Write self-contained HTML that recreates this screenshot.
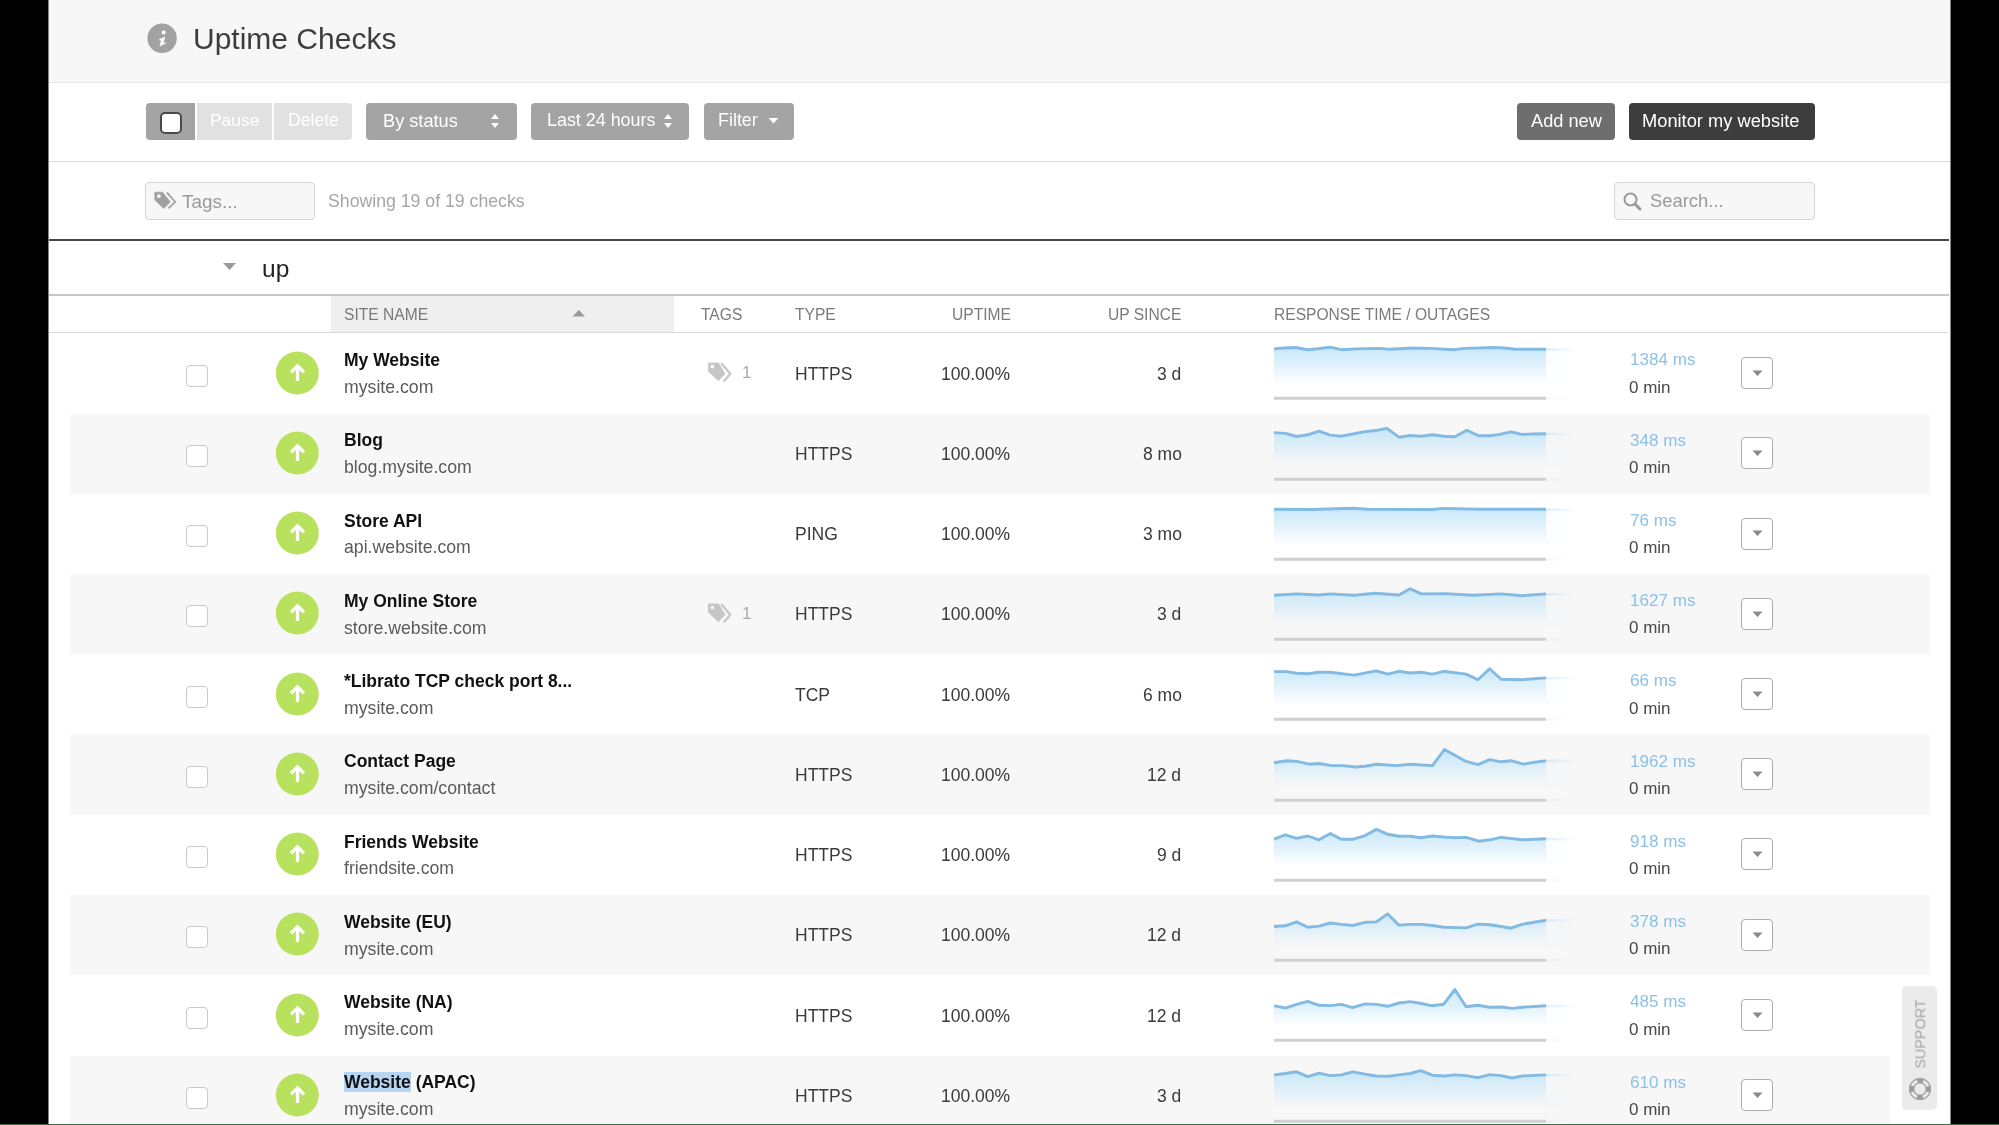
<!DOCTYPE html>
<html><head><meta charset="utf-8"><title>Uptime Checks</title>
<style>
html,body{margin:0;padding:0}
body{width:1999px;height:1125px;position:relative;overflow:hidden;background:#000;font-family:"Liberation Sans",sans-serif}
.a{position:absolute;box-sizing:border-box}
.t{position:absolute;white-space:nowrap;will-change:transform}
svg{position:absolute;overflow:visible}
</style></head><body>
<div class="a" style="left:49px;top:0px;width:1901px;height:1125px;background:#fff"></div>
<div class="a" style="left:48px;top:0px;width:1px;height:1124px;background:#858585"></div>
<div class="a" style="left:1950px;top:0px;width:1px;height:1124px;background:#858585"></div>
<div class="a" style="left:49px;top:0px;width:1901px;height:82px;background:#f7f7f7"></div>
<div class="a" style="left:49px;top:82px;width:1901px;height:1px;background:#e6e6e6"></div>
<svg style="left:147px;top:23px" width="30" height="30"><circle cx="15.1" cy="15.25" r="14.7" fill="#a2a2a2"/><circle cx="16.7" cy="9.5" r="2.05" fill="#fff"/><path d="M12.2 16.6 L17.9 13.9 L16.2 19.9 L18.9 20.0 L12.9 23.0 L14.3 17.4 Z" fill="#fff" stroke="#fff" stroke-width="0.6" stroke-linejoin="round"/></svg>
<div class="t" style="left:193.00px;top:23.81px;font-size:30px;line-height:30px;color:#3d3d3d;">Uptime Checks</div>
<div class="a" style="left:146px;top:103px;width:49px;height:37px;background:#a4a4a4;border-radius:4px 0 0 4px"></div>
<div class="a" style="left:160px;top:112px;width:22px;height:22px;background:#fff;border:2px solid #4a4a4a;border-radius:5px"></div>
<div class="a" style="left:197px;top:103px;width:75px;height:37px;background:#e1e1e1"></div>
<div class="a" style="left:274px;top:103px;width:78px;height:37px;background:#e1e1e1;border-radius:0 4px 4px 0"></div>
<div class="t" style="left:210.00px;top:112.27px;font-size:17.4px;line-height:17.4px;color:#fff;">Pause</div>
<div class="t" style="left:288.00px;top:112.10px;font-size:17.6px;line-height:17.6px;color:#fff;">Delete</div>
<div class="a" style="left:366px;top:103px;width:151px;height:37px;background:#a4a4a4;border-radius:4px"></div>
<div class="a" style="left:531px;top:103px;width:158px;height:37px;background:#a4a4a4;border-radius:4px"></div>
<div class="a" style="left:704px;top:103px;width:90px;height:37px;background:#a4a4a4;border-radius:4px"></div>
<div class="t" style="left:383.00px;top:111.59px;font-size:18.2px;line-height:18.2px;color:#fff;">By status</div>
<div class="t" style="left:547.00px;top:111.85px;font-size:17.9px;line-height:17.9px;color:#fff;">Last 24 hours</div>
<div class="t" style="left:718.00px;top:111.85px;font-size:17.9px;line-height:17.9px;color:#fff;">Filter</div>
<svg style="left:488.5px;top:111px" width="12" height="20"><path d="M2 8 L6 3 L10 8 Z M2 12 L6 17 L10 12 Z" fill="#fff"/></svg>
<svg style="left:662px;top:111px" width="12" height="20"><path d="M2 8 L6 3 L10 8 Z M2 12 L6 17 L10 12 Z" fill="#fff"/></svg>
<svg style="left:768px;top:117px" width="12" height="8"><path d="M0.5 1 L10.5 1 L5.5 6.5 Z" fill="#fff"/></svg>
<div class="a" style="left:1517px;top:103px;width:98px;height:37px;background:#6e6e6e;border-radius:4px"></div>
<div class="a" style="left:1629px;top:103px;width:186px;height:37px;background:#3d3d3d;border-radius:4px"></div>
<div class="t" style="left:1531.00px;top:111.59px;font-size:18.2px;line-height:18.2px;color:#fff;">Add new</div>
<div class="t" style="left:1642.00px;top:111.51px;font-size:18.3px;line-height:18.3px;color:#fff;">Monitor my website</div>
<div class="a" style="left:49px;top:161px;width:1901px;height:1px;background:#d9d9d9"></div>
<div class="a" style="left:145px;top:182px;width:170px;height:38px;background:#f7f7f7;border:1.5px solid #d6d6d6;border-radius:4px"></div>
<svg style="left:154px;top:191px" width="24" height="20"><path d="M0.9 1.2 L8.4 1.2 L16.3 11.0 L9.7 17.4 L0.9 8.9 Z" fill="#a0a0a0" stroke="#a0a0a0" stroke-width="0.8" stroke-linejoin="round"/><circle cx="4.9" cy="5.2" r="1.9" fill="#f7f7f7"/><path d="M12.9 1.4 L21.2 11.0 L14.4 17.4" fill="none" stroke="#a6a6a6" stroke-width="1.9"/></svg>
<div class="t" style="left:182.00px;top:192.80px;font-size:18.9px;line-height:18.9px;color:#999;">Tags...</div>
<div class="t" style="left:328.00px;top:192.92px;font-size:17.7px;line-height:17.7px;color:#a6a6a6;">Showing 19 of 19 checks</div>
<div class="a" style="left:1614px;top:182px;width:201px;height:38px;background:#f7f7f7;border:1.5px solid #d6d6d6;border-radius:4px"></div>
<svg style="left:1622px;top:191px" width="22" height="22"><circle cx="8.5" cy="8.5" r="6" fill="none" stroke="#9a9a9a" stroke-width="2"/><path d="M13 13 L18 18" stroke="#9a9a9a" stroke-width="3" stroke-linecap="round"/></svg>
<div class="t" style="left:1650.00px;top:191.92px;font-size:18.4px;line-height:18.4px;color:#999;">Search...</div>
<div class="a" style="left:49px;top:239px;width:1900px;height:2px;background:#474747"></div>
<svg style="left:222px;top:262px" width="16" height="10"><path d="M1 1 L14 1 L7.5 8 Z" fill="#9a9a9a"/></svg>
<div class="t" style="left:262.00px;top:256.51px;font-size:24.5px;line-height:24.5px;color:#222;">up</div>
<div class="a" style="left:49px;top:294px;width:1900px;height:2px;background:#c6c6c6"></div>
<div class="a" style="left:331px;top:296px;width:343px;height:36px;background:#efefef"></div>
<div class="a" style="left:49px;top:332px;width:1900px;height:1px;background:#dadada"></div>
<div class="t" style="left:344.00px;top:306.79px;font-size:15.6px;line-height:15.6px;color:#7a7a7a;">SITE NAME</div>
<svg style="left:571px;top:309px" width="16" height="9"><path d="M1.5 7.5 L14 7.5 L7.75 1 Z" fill="#9a9a9a"/></svg>
<div class="t" style="left:701.00px;top:306.79px;font-size:15.6px;line-height:15.6px;color:#7a7a7a;">TAGS</div>
<div class="t" style="left:795.00px;top:306.79px;font-size:15.6px;line-height:15.6px;color:#7a7a7a;">TYPE</div>
<div class="t" style="right:988.50px;top:306.79px;font-size:15.6px;line-height:15.6px;color:#7a7a7a;">UPTIME</div>
<div class="t" style="right:817.50px;top:306.79px;font-size:15.6px;line-height:15.6px;color:#7a7a7a;">UP SINCE</div>
<div class="t" style="left:1274.00px;top:306.79px;font-size:15.6px;line-height:15.6px;color:#7a7a7a;">RESPONSE TIME / OUTAGES</div>
<div class="a" style="left:186px;top:365px;width:22px;height:22px;background:#fff;border:1.5px solid #c9c9c9;border-radius:4px"></div>
<svg style="left:275px;top:350.55px" width="44" height="44"><circle cx="22.3" cy="22" r="21.5" fill="#b8e25e"/><path d="M22.5 30 L22.5 15.5 M16 21.3 L22.5 14.8 L29 21.3" fill="none" stroke="#fff" stroke-width="3.3" stroke-linecap="butt" stroke-linejoin="miter"/></svg>
<div class="t" style="left:344.00px;top:352.14px;font-size:17.5px;line-height:17.5px;color:#111;font-weight:bold;">My Website</div>
<div class="t" style="left:344.00px;top:378.87px;font-size:17.7px;line-height:17.7px;color:#5a5a5a;">mysite.com</div>
<svg style="left:707px;top:362.25px" width="26" height="22"><path d="M1.4 0.9 L11.6 0.9 L17.9 11.8 L11.4 18.8 L1.4 9.2 Z" fill="#c6c6c6" stroke="#c6c6c6" stroke-width="0.8" stroke-linejoin="round"/><circle cx="5.4" cy="4.6" r="1.8" fill="#fff"/><path d="M14.3 1.2 L23.3 11.8 L16.6 19.5" fill="none" stroke="#c8c8c8" stroke-width="2.3"/></svg>
<div class="t" style="left:742.00px;top:364.06px;font-size:17px;line-height:17px;color:#aaa;">1</div>
<div class="t" style="left:795.00px;top:365.64px;font-size:17.5px;line-height:17.5px;color:#3a3a3a;">HTTPS</div>
<div class="t" style="right:988.50px;top:365.64px;font-size:17.5px;line-height:17.5px;color:#3a3a3a;">100.00%</div>
<div class="t" style="right:817.50px;top:365.64px;font-size:17.5px;line-height:17.5px;color:#3a3a3a;">3 d</div>
<svg style="left:1274px;top:333.25px" width="304" height="70"><defs><linearGradient id="g0" x1="0" y1="0" x2="0" y2="56" gradientUnits="userSpaceOnUse"><stop offset="0.22" stop-color="#bde3f8" stop-opacity="0.9"/><stop offset="0.6" stop-color="#cbe9fa" stop-opacity="0.55"/><stop offset="0.95" stop-color="#e0f0fb" stop-opacity="0"/></linearGradient><linearGradient id="h0" x1="272" y1="0" x2="304" y2="0" gradientUnits="userSpaceOnUse"><stop offset="0" stop-color="#9fd0f0" stop-opacity="0.35"/><stop offset="1" stop-color="#9fd0f0" stop-opacity="0"/></linearGradient></defs><path d="M0.0 15.9 L9.8 15.0 L21.7 14.5 L33.6 16.7 L43.8 15.7 L55.7 14.2 L67.6 16.7 L81.2 15.9 L105.0 15.4 L115.3 16.2 L139.1 15.0 L156.1 15.4 L179.9 16.7 L190.1 15.4 L220.7 14.5 L230.9 15.0 L241.1 16.2 L272.0 16.2 L272 56 L0 56 Z" fill="url(#g0)"/><path d="M0.0 15.9 L9.8 15.0 L21.7 14.5 L33.6 16.7 L43.8 15.7 L55.7 14.2 L67.6 16.7 L81.2 15.9 L105.0 15.4 L115.3 16.2 L139.1 15.0 L156.1 15.4 L179.9 16.7 L190.1 15.4 L220.7 14.5 L230.9 15.0 L241.1 16.2 L272.0 16.2" fill="none" stroke="#82bae3" stroke-width="2.9" stroke-linejoin="round"/><rect x="0" y="63.75" width="272" height="3" fill="#d0d0d0"/><rect x="272" y="15.2" width="30" height="2.5" fill="url(#h0)"/><rect x="272" y="17.7" width="30" height="33.8" fill="url(#h0)" opacity="0.12"/><rect x="272" y="63.75" width="30" height="3" fill="url(#h0)" opacity="0.3"/></svg>
<div class="t" style="left:1630.00px;top:351.27px;font-size:17.1px;line-height:17.1px;color:#8cc1e8;">1384 ms</div>
<div class="t" style="left:1629.00px;top:378.66px;font-size:17px;line-height:17px;color:#484848;">0 min</div>
<div class="a" style="left:1741px;top:357px;width:32px;height:32px;background:#fff;border:1.5px solid #adadad;border-radius:4px"></div>
<svg style="left:1752px;top:369.75px" width="12" height="8"><path d="M0.5 0.5 L10.5 0.5 L5.5 6 Z" fill="#8a8a8a"/></svg>
<div class="a" style="left:70px;top:414px;width:1860px;height:80px;background:#f7f7f7"></div>
<div class="a" style="left:186px;top:445px;width:22px;height:22px;background:#fff;border:1.5px solid #c9c9c9;border-radius:4px"></div>
<svg style="left:275px;top:430.80px" width="44" height="44"><circle cx="22.3" cy="22" r="21.5" fill="#b8e25e"/><path d="M22.5 30 L22.5 15.5 M16 21.3 L22.5 14.8 L29 21.3" fill="none" stroke="#fff" stroke-width="3.3" stroke-linecap="butt" stroke-linejoin="miter"/></svg>
<div class="t" style="left:344.00px;top:432.39px;font-size:17.5px;line-height:17.5px;color:#111;font-weight:bold;">Blog</div>
<div class="t" style="left:344.00px;top:459.12px;font-size:17.7px;line-height:17.7px;color:#5a5a5a;">blog.mysite.com</div>
<div class="t" style="left:795.00px;top:445.89px;font-size:17.5px;line-height:17.5px;color:#3a3a3a;">HTTPS</div>
<div class="t" style="right:988.50px;top:445.89px;font-size:17.5px;line-height:17.5px;color:#3a3a3a;">100.00%</div>
<div class="t" style="right:817.50px;top:445.89px;font-size:17.5px;line-height:17.5px;color:#3a3a3a;">8 mo</div>
<svg style="left:1274px;top:413.50px" width="304" height="70"><defs><linearGradient id="g1" x1="0" y1="0" x2="0" y2="56" gradientUnits="userSpaceOnUse"><stop offset="0.22" stop-color="#bde3f8" stop-opacity="0.9"/><stop offset="0.6" stop-color="#cbe9fa" stop-opacity="0.55"/><stop offset="0.95" stop-color="#e0f0fb" stop-opacity="0"/></linearGradient><linearGradient id="h1" x1="272" y1="0" x2="304" y2="0" gradientUnits="userSpaceOnUse"><stop offset="0" stop-color="#9fd0f0" stop-opacity="0.35"/><stop offset="1" stop-color="#9fd0f0" stop-opacity="0"/></linearGradient></defs><path d="M0.0 18.6 L11.4 19.4 L22.6 22.5 L33.8 20.8 L45.0 17.2 L56.2 21.1 L67.4 22.2 L78.6 20.0 L91.2 17.6 L103.8 16.2 L112.9 14.4 L124.9 23.2 L136.1 21.5 L147.3 22.2 L158.5 20.8 L169.7 22.2 L180.9 22.8 L192.8 16.2 L204.7 21.8 L215.9 21.8 L225.7 20.4 L236.9 17.9 L248.1 20.4 L259.3 20.0 L272.0 19.7 L272 56 L0 56 Z" fill="url(#g1)"/><path d="M0.0 18.6 L11.4 19.4 L22.6 22.5 L33.8 20.8 L45.0 17.2 L56.2 21.1 L67.4 22.2 L78.6 20.0 L91.2 17.6 L103.8 16.2 L112.9 14.4 L124.9 23.2 L136.1 21.5 L147.3 22.2 L158.5 20.8 L169.7 22.2 L180.9 22.8 L192.8 16.2 L204.7 21.8 L215.9 21.8 L225.7 20.4 L236.9 17.9 L248.1 20.4 L259.3 20.0 L272.0 19.7" fill="none" stroke="#82bae3" stroke-width="2.9" stroke-linejoin="round"/><rect x="0" y="63.75" width="272" height="3" fill="#d0d0d0"/><rect x="272" y="18.7" width="30" height="2.5" fill="url(#h1)"/><rect x="272" y="21.2" width="30" height="30.3" fill="url(#h1)" opacity="0.12"/><rect x="272" y="63.75" width="30" height="3" fill="url(#h1)" opacity="0.3"/></svg>
<div class="t" style="left:1630.00px;top:431.52px;font-size:17.1px;line-height:17.1px;color:#8cc1e8;">348 ms</div>
<div class="t" style="left:1629.00px;top:458.91px;font-size:17px;line-height:17px;color:#484848;">0 min</div>
<div class="a" style="left:1741px;top:437px;width:32px;height:32px;background:#fff;border:1.5px solid #adadad;border-radius:4px"></div>
<svg style="left:1752px;top:450.00px" width="12" height="8"><path d="M0.5 0.5 L10.5 0.5 L5.5 6 Z" fill="#8a8a8a"/></svg>
<div class="a" style="left:186px;top:525px;width:22px;height:22px;background:#fff;border:1.5px solid #c9c9c9;border-radius:4px"></div>
<svg style="left:275px;top:511.05px" width="44" height="44"><circle cx="22.3" cy="22" r="21.5" fill="#b8e25e"/><path d="M22.5 30 L22.5 15.5 M16 21.3 L22.5 14.8 L29 21.3" fill="none" stroke="#fff" stroke-width="3.3" stroke-linecap="butt" stroke-linejoin="miter"/></svg>
<div class="t" style="left:344.00px;top:512.64px;font-size:17.5px;line-height:17.5px;color:#111;font-weight:bold;">Store API</div>
<div class="t" style="left:344.00px;top:539.37px;font-size:17.7px;line-height:17.7px;color:#5a5a5a;">api.website.com</div>
<div class="t" style="left:795.00px;top:526.14px;font-size:17.5px;line-height:17.5px;color:#3a3a3a;">PING</div>
<div class="t" style="right:988.50px;top:526.14px;font-size:17.5px;line-height:17.5px;color:#3a3a3a;">100.00%</div>
<div class="t" style="right:817.50px;top:526.14px;font-size:17.5px;line-height:17.5px;color:#3a3a3a;">3 mo</div>
<svg style="left:1274px;top:493.75px" width="304" height="70"><defs><linearGradient id="g2" x1="0" y1="0" x2="0" y2="56" gradientUnits="userSpaceOnUse"><stop offset="0.22" stop-color="#bde3f8" stop-opacity="0.9"/><stop offset="0.6" stop-color="#cbe9fa" stop-opacity="0.55"/><stop offset="0.95" stop-color="#e0f0fb" stop-opacity="0"/></linearGradient><linearGradient id="h2" x1="272" y1="0" x2="304" y2="0" gradientUnits="userSpaceOnUse"><stop offset="0" stop-color="#9fd0f0" stop-opacity="0.35"/><stop offset="1" stop-color="#9fd0f0" stop-opacity="0"/></linearGradient></defs><path d="M0.0 15.3 L38.0 15.5 L78.6 14.3 L94.0 15.3 L158.5 15.5 L169.7 14.4 L206.1 15.3 L272.0 15.3 L272 56 L0 56 Z" fill="url(#g2)"/><path d="M0.0 15.3 L38.0 15.5 L78.6 14.3 L94.0 15.3 L158.5 15.5 L169.7 14.4 L206.1 15.3 L272.0 15.3" fill="none" stroke="#82bae3" stroke-width="2.9" stroke-linejoin="round"/><rect x="0" y="63.75" width="272" height="3" fill="#d0d0d0"/><rect x="272" y="14.3" width="30" height="2.5" fill="url(#h2)"/><rect x="272" y="16.8" width="30" height="34.7" fill="url(#h2)" opacity="0.12"/><rect x="272" y="63.75" width="30" height="3" fill="url(#h2)" opacity="0.3"/></svg>
<div class="t" style="left:1630.00px;top:511.77px;font-size:17.1px;line-height:17.1px;color:#8cc1e8;">76 ms</div>
<div class="t" style="left:1629.00px;top:539.16px;font-size:17px;line-height:17px;color:#484848;">0 min</div>
<div class="a" style="left:1741px;top:518px;width:32px;height:32px;background:#fff;border:1.5px solid #adadad;border-radius:4px"></div>
<svg style="left:1752px;top:530.25px" width="12" height="8"><path d="M0.5 0.5 L10.5 0.5 L5.5 6 Z" fill="#8a8a8a"/></svg>
<div class="a" style="left:70px;top:574px;width:1860px;height:80px;background:#f7f7f7"></div>
<div class="a" style="left:186px;top:605px;width:22px;height:22px;background:#fff;border:1.5px solid #c9c9c9;border-radius:4px"></div>
<svg style="left:275px;top:591.30px" width="44" height="44"><circle cx="22.3" cy="22" r="21.5" fill="#b8e25e"/><path d="M22.5 30 L22.5 15.5 M16 21.3 L22.5 14.8 L29 21.3" fill="none" stroke="#fff" stroke-width="3.3" stroke-linecap="butt" stroke-linejoin="miter"/></svg>
<div class="t" style="left:344.00px;top:592.89px;font-size:17.5px;line-height:17.5px;color:#111;font-weight:bold;">My Online Store</div>
<div class="t" style="left:344.00px;top:619.62px;font-size:17.7px;line-height:17.7px;color:#5a5a5a;">store.website.com</div>
<svg style="left:707px;top:603.00px" width="26" height="22"><path d="M1.4 0.9 L11.6 0.9 L17.9 11.8 L11.4 18.8 L1.4 9.2 Z" fill="#c6c6c6" stroke="#c6c6c6" stroke-width="0.8" stroke-linejoin="round"/><circle cx="5.4" cy="4.6" r="1.8" fill="#f7f7f7"/><path d="M14.3 1.2 L23.3 11.8 L16.6 19.5" fill="none" stroke="#c8c8c8" stroke-width="2.3"/></svg>
<div class="t" style="left:742.00px;top:604.81px;font-size:17px;line-height:17px;color:#aaa;">1</div>
<div class="t" style="left:795.00px;top:606.39px;font-size:17.5px;line-height:17.5px;color:#3a3a3a;">HTTPS</div>
<div class="t" style="right:988.50px;top:606.39px;font-size:17.5px;line-height:17.5px;color:#3a3a3a;">100.00%</div>
<div class="t" style="right:817.50px;top:606.39px;font-size:17.5px;line-height:17.5px;color:#3a3a3a;">3 d</div>
<svg style="left:1274px;top:574.00px" width="304" height="70"><defs><linearGradient id="g3" x1="0" y1="0" x2="0" y2="56" gradientUnits="userSpaceOnUse"><stop offset="0.22" stop-color="#bde3f8" stop-opacity="0.9"/><stop offset="0.6" stop-color="#cbe9fa" stop-opacity="0.55"/><stop offset="0.95" stop-color="#e0f0fb" stop-opacity="0"/></linearGradient><linearGradient id="h3" x1="272" y1="0" x2="304" y2="0" gradientUnits="userSpaceOnUse"><stop offset="0" stop-color="#9fd0f0" stop-opacity="0.35"/><stop offset="1" stop-color="#9fd0f0" stop-opacity="0"/></linearGradient></defs><path d="M0.0 21.3 L22.6 19.9 L45.0 21.0 L56.2 19.9 L80.0 21.3 L101.0 19.2 L124.9 21.0 L136.1 14.7 L147.3 19.9 L171.1 19.6 L199.1 21.3 L227.1 19.9 L248.1 21.7 L272.0 19.9 L272 56 L0 56 Z" fill="url(#g3)"/><path d="M0.0 21.3 L22.6 19.9 L45.0 21.0 L56.2 19.9 L80.0 21.3 L101.0 19.2 L124.9 21.0 L136.1 14.7 L147.3 19.9 L171.1 19.6 L199.1 21.3 L227.1 19.9 L248.1 21.7 L272.0 19.9" fill="none" stroke="#82bae3" stroke-width="2.9" stroke-linejoin="round"/><rect x="0" y="63.75" width="272" height="3" fill="#d0d0d0"/><rect x="272" y="18.9" width="30" height="2.5" fill="url(#h3)"/><rect x="272" y="21.4" width="30" height="30.1" fill="url(#h3)" opacity="0.12"/><rect x="272" y="63.75" width="30" height="3" fill="url(#h3)" opacity="0.3"/></svg>
<div class="t" style="left:1630.00px;top:592.02px;font-size:17.1px;line-height:17.1px;color:#8cc1e8;">1627 ms</div>
<div class="t" style="left:1629.00px;top:619.41px;font-size:17px;line-height:17px;color:#484848;">0 min</div>
<div class="a" style="left:1741px;top:598px;width:32px;height:32px;background:#fff;border:1.5px solid #adadad;border-radius:4px"></div>
<svg style="left:1752px;top:610.50px" width="12" height="8"><path d="M0.5 0.5 L10.5 0.5 L5.5 6 Z" fill="#8a8a8a"/></svg>
<div class="a" style="left:186px;top:686px;width:22px;height:22px;background:#fff;border:1.5px solid #c9c9c9;border-radius:4px"></div>
<svg style="left:275px;top:671.55px" width="44" height="44"><circle cx="22.3" cy="22" r="21.5" fill="#b8e25e"/><path d="M22.5 30 L22.5 15.5 M16 21.3 L22.5 14.8 L29 21.3" fill="none" stroke="#fff" stroke-width="3.3" stroke-linecap="butt" stroke-linejoin="miter"/></svg>
<div class="t" style="left:344.00px;top:673.14px;font-size:17.5px;line-height:17.5px;color:#111;font-weight:bold;">*Librato TCP check port 8...</div>
<div class="t" style="left:344.00px;top:699.87px;font-size:17.7px;line-height:17.7px;color:#5a5a5a;">mysite.com</div>
<div class="t" style="left:795.00px;top:686.64px;font-size:17.5px;line-height:17.5px;color:#3a3a3a;">TCP</div>
<div class="t" style="right:988.50px;top:686.64px;font-size:17.5px;line-height:17.5px;color:#3a3a3a;">100.00%</div>
<div class="t" style="right:817.50px;top:686.64px;font-size:17.5px;line-height:17.5px;color:#3a3a3a;">6 mo</div>
<svg style="left:1274px;top:654.25px" width="304" height="70"><defs><linearGradient id="g4" x1="0" y1="0" x2="0" y2="56" gradientUnits="userSpaceOnUse"><stop offset="0.22" stop-color="#bde3f8" stop-opacity="0.9"/><stop offset="0.6" stop-color="#cbe9fa" stop-opacity="0.55"/><stop offset="0.95" stop-color="#e0f0fb" stop-opacity="0"/></linearGradient><linearGradient id="h4" x1="272" y1="0" x2="304" y2="0" gradientUnits="userSpaceOnUse"><stop offset="0" stop-color="#9fd0f0" stop-opacity="0.35"/><stop offset="1" stop-color="#9fd0f0" stop-opacity="0"/></linearGradient></defs><path d="M0.0 17.6 L12.8 17.6 L22.6 19.2 L33.8 19.7 L45.0 18.3 L56.2 18.3 L80.0 21.1 L102.4 16.9 L113.6 20.1 L124.9 17.3 L136.1 19.0 L147.3 18.3 L158.5 20.1 L169.7 17.3 L192.1 20.1 L204.0 25.7 L215.6 14.8 L227.1 25.3 L248.1 25.7 L272.0 23.9 L272 56 L0 56 Z" fill="url(#g4)"/><path d="M0.0 17.6 L12.8 17.6 L22.6 19.2 L33.8 19.7 L45.0 18.3 L56.2 18.3 L80.0 21.1 L102.4 16.9 L113.6 20.1 L124.9 17.3 L136.1 19.0 L147.3 18.3 L158.5 20.1 L169.7 17.3 L192.1 20.1 L204.0 25.7 L215.6 14.8 L227.1 25.3 L248.1 25.7 L272.0 23.9" fill="none" stroke="#82bae3" stroke-width="2.9" stroke-linejoin="round"/><rect x="0" y="63.75" width="272" height="3" fill="#d0d0d0"/><rect x="272" y="22.9" width="30" height="2.5" fill="url(#h4)"/><rect x="272" y="25.4" width="30" height="26.1" fill="url(#h4)" opacity="0.12"/><rect x="272" y="63.75" width="30" height="3" fill="url(#h4)" opacity="0.3"/></svg>
<div class="t" style="left:1630.00px;top:672.27px;font-size:17.1px;line-height:17.1px;color:#8cc1e8;">66 ms</div>
<div class="t" style="left:1629.00px;top:699.66px;font-size:17px;line-height:17px;color:#484848;">0 min</div>
<div class="a" style="left:1741px;top:678px;width:32px;height:32px;background:#fff;border:1.5px solid #adadad;border-radius:4px"></div>
<svg style="left:1752px;top:690.75px" width="12" height="8"><path d="M0.5 0.5 L10.5 0.5 L5.5 6 Z" fill="#8a8a8a"/></svg>
<div class="a" style="left:70px;top:734px;width:1860px;height:81px;background:#f7f7f7"></div>
<div class="a" style="left:186px;top:766px;width:22px;height:22px;background:#fff;border:1.5px solid #c9c9c9;border-radius:4px"></div>
<svg style="left:275px;top:751.80px" width="44" height="44"><circle cx="22.3" cy="22" r="21.5" fill="#b8e25e"/><path d="M22.5 30 L22.5 15.5 M16 21.3 L22.5 14.8 L29 21.3" fill="none" stroke="#fff" stroke-width="3.3" stroke-linecap="butt" stroke-linejoin="miter"/></svg>
<div class="t" style="left:344.00px;top:753.39px;font-size:17.5px;line-height:17.5px;color:#111;font-weight:bold;">Contact Page</div>
<div class="t" style="left:344.00px;top:780.12px;font-size:17.7px;line-height:17.7px;color:#5a5a5a;">mysite.com/contact</div>
<div class="t" style="left:795.00px;top:766.89px;font-size:17.5px;line-height:17.5px;color:#3a3a3a;">HTTPS</div>
<div class="t" style="right:988.50px;top:766.89px;font-size:17.5px;line-height:17.5px;color:#3a3a3a;">100.00%</div>
<div class="t" style="right:817.50px;top:766.89px;font-size:17.5px;line-height:17.5px;color:#3a3a3a;">12 d</div>
<svg style="left:1274px;top:734.50px" width="304" height="70"><defs><linearGradient id="g5" x1="0" y1="0" x2="0" y2="56" gradientUnits="userSpaceOnUse"><stop offset="0.22" stop-color="#bde3f8" stop-opacity="0.9"/><stop offset="0.6" stop-color="#cbe9fa" stop-opacity="0.55"/><stop offset="0.95" stop-color="#e0f0fb" stop-opacity="0"/></linearGradient><linearGradient id="h5" x1="272" y1="0" x2="304" y2="0" gradientUnits="userSpaceOnUse"><stop offset="0" stop-color="#9fd0f0" stop-opacity="0.35"/><stop offset="1" stop-color="#9fd0f0" stop-opacity="0"/></linearGradient></defs><path d="M0.0 27.8 L12.8 25.7 L22.6 26.4 L35.2 29.2 L45.0 28.5 L57.6 30.6 L68.8 30.6 L81.4 32.0 L91.2 31.3 L102.4 29.2 L122.1 30.6 L136.1 29.2 L158.5 30.6 L170.4 14.5 L192.1 26.4 L204.0 29.6 L215.6 24.6 L227.1 26.8 L236.9 25.7 L249.5 29.2 L259.3 27.4 L272.0 25.7 L272 56 L0 56 Z" fill="url(#g5)"/><path d="M0.0 27.8 L12.8 25.7 L22.6 26.4 L35.2 29.2 L45.0 28.5 L57.6 30.6 L68.8 30.6 L81.4 32.0 L91.2 31.3 L102.4 29.2 L122.1 30.6 L136.1 29.2 L158.5 30.6 L170.4 14.5 L192.1 26.4 L204.0 29.6 L215.6 24.6 L227.1 26.8 L236.9 25.7 L249.5 29.2 L259.3 27.4 L272.0 25.7" fill="none" stroke="#82bae3" stroke-width="2.9" stroke-linejoin="round"/><rect x="0" y="63.75" width="272" height="3" fill="#d0d0d0"/><rect x="272" y="24.7" width="30" height="2.5" fill="url(#h5)"/><rect x="272" y="27.2" width="30" height="24.3" fill="url(#h5)" opacity="0.12"/><rect x="272" y="63.75" width="30" height="3" fill="url(#h5)" opacity="0.3"/></svg>
<div class="t" style="left:1630.00px;top:752.52px;font-size:17.1px;line-height:17.1px;color:#8cc1e8;">1962 ms</div>
<div class="t" style="left:1629.00px;top:779.91px;font-size:17px;line-height:17px;color:#484848;">0 min</div>
<div class="a" style="left:1741px;top:758px;width:32px;height:32px;background:#fff;border:1.5px solid #adadad;border-radius:4px"></div>
<svg style="left:1752px;top:771.00px" width="12" height="8"><path d="M0.5 0.5 L10.5 0.5 L5.5 6 Z" fill="#8a8a8a"/></svg>
<div class="a" style="left:186px;top:846px;width:22px;height:22px;background:#fff;border:1.5px solid #c9c9c9;border-radius:4px"></div>
<svg style="left:275px;top:832.05px" width="44" height="44"><circle cx="22.3" cy="22" r="21.5" fill="#b8e25e"/><path d="M22.5 30 L22.5 15.5 M16 21.3 L22.5 14.8 L29 21.3" fill="none" stroke="#fff" stroke-width="3.3" stroke-linecap="butt" stroke-linejoin="miter"/></svg>
<div class="t" style="left:344.00px;top:833.64px;font-size:17.5px;line-height:17.5px;color:#111;font-weight:bold;">Friends Website</div>
<div class="t" style="left:344.00px;top:860.37px;font-size:17.7px;line-height:17.7px;color:#5a5a5a;">friendsite.com</div>
<div class="t" style="left:795.00px;top:847.14px;font-size:17.5px;line-height:17.5px;color:#3a3a3a;">HTTPS</div>
<div class="t" style="right:988.50px;top:847.14px;font-size:17.5px;line-height:17.5px;color:#3a3a3a;">100.00%</div>
<div class="t" style="right:817.50px;top:847.14px;font-size:17.5px;line-height:17.5px;color:#3a3a3a;">9 d</div>
<svg style="left:1274px;top:814.75px" width="304" height="70"><defs><linearGradient id="g6" x1="0" y1="0" x2="0" y2="56" gradientUnits="userSpaceOnUse"><stop offset="0.22" stop-color="#bde3f8" stop-opacity="0.9"/><stop offset="0.6" stop-color="#cbe9fa" stop-opacity="0.55"/><stop offset="0.95" stop-color="#e0f0fb" stop-opacity="0"/></linearGradient><linearGradient id="h6" x1="272" y1="0" x2="304" y2="0" gradientUnits="userSpaceOnUse"><stop offset="0" stop-color="#9fd0f0" stop-opacity="0.35"/><stop offset="1" stop-color="#9fd0f0" stop-opacity="0"/></linearGradient></defs><path d="M0.0 24.1 L11.4 19.9 L22.6 23.4 L33.8 21.0 L45.0 24.8 L56.2 18.5 L67.4 24.3 L78.6 24.3 L91.2 20.6 L102.4 14.3 L113.6 19.2 L124.9 21.3 L136.1 21.3 L147.3 22.7 L158.5 21.0 L169.7 22.0 L180.9 22.7 L192.1 22.4 L204.7 26.2 L215.9 24.8 L227.1 22.4 L248.1 24.8 L272.0 23.8 L272 56 L0 56 Z" fill="url(#g6)"/><path d="M0.0 24.1 L11.4 19.9 L22.6 23.4 L33.8 21.0 L45.0 24.8 L56.2 18.5 L67.4 24.3 L78.6 24.3 L91.2 20.6 L102.4 14.3 L113.6 19.2 L124.9 21.3 L136.1 21.3 L147.3 22.7 L158.5 21.0 L169.7 22.0 L180.9 22.7 L192.1 22.4 L204.7 26.2 L215.9 24.8 L227.1 22.4 L248.1 24.8 L272.0 23.8" fill="none" stroke="#82bae3" stroke-width="2.9" stroke-linejoin="round"/><rect x="0" y="63.75" width="272" height="3" fill="#d0d0d0"/><rect x="272" y="22.8" width="30" height="2.5" fill="url(#h6)"/><rect x="272" y="25.3" width="30" height="26.2" fill="url(#h6)" opacity="0.12"/><rect x="272" y="63.75" width="30" height="3" fill="url(#h6)" opacity="0.3"/></svg>
<div class="t" style="left:1630.00px;top:832.77px;font-size:17.1px;line-height:17.1px;color:#8cc1e8;">918 ms</div>
<div class="t" style="left:1629.00px;top:860.16px;font-size:17px;line-height:17px;color:#484848;">0 min</div>
<div class="a" style="left:1741px;top:838px;width:32px;height:32px;background:#fff;border:1.5px solid #adadad;border-radius:4px"></div>
<svg style="left:1752px;top:851.25px" width="12" height="8"><path d="M0.5 0.5 L10.5 0.5 L5.5 6 Z" fill="#8a8a8a"/></svg>
<div class="a" style="left:70px;top:895px;width:1860px;height:80px;background:#f7f7f7"></div>
<div class="a" style="left:186px;top:926px;width:22px;height:22px;background:#fff;border:1.5px solid #c9c9c9;border-radius:4px"></div>
<svg style="left:275px;top:912.30px" width="44" height="44"><circle cx="22.3" cy="22" r="21.5" fill="#b8e25e"/><path d="M22.5 30 L22.5 15.5 M16 21.3 L22.5 14.8 L29 21.3" fill="none" stroke="#fff" stroke-width="3.3" stroke-linecap="butt" stroke-linejoin="miter"/></svg>
<div class="t" style="left:344.00px;top:913.89px;font-size:17.5px;line-height:17.5px;color:#111;font-weight:bold;">Website (EU)</div>
<div class="t" style="left:344.00px;top:940.62px;font-size:17.7px;line-height:17.7px;color:#5a5a5a;">mysite.com</div>
<div class="t" style="left:795.00px;top:927.39px;font-size:17.5px;line-height:17.5px;color:#3a3a3a;">HTTPS</div>
<div class="t" style="right:988.50px;top:927.39px;font-size:17.5px;line-height:17.5px;color:#3a3a3a;">100.00%</div>
<div class="t" style="right:817.50px;top:927.39px;font-size:17.5px;line-height:17.5px;color:#3a3a3a;">12 d</div>
<svg style="left:1274px;top:895.00px" width="304" height="70"><defs><linearGradient id="g7" x1="0" y1="0" x2="0" y2="56" gradientUnits="userSpaceOnUse"><stop offset="0.22" stop-color="#bde3f8" stop-opacity="0.9"/><stop offset="0.6" stop-color="#cbe9fa" stop-opacity="0.55"/><stop offset="0.95" stop-color="#e0f0fb" stop-opacity="0"/></linearGradient><linearGradient id="h7" x1="272" y1="0" x2="304" y2="0" gradientUnits="userSpaceOnUse"><stop offset="0" stop-color="#9fd0f0" stop-opacity="0.35"/><stop offset="1" stop-color="#9fd0f0" stop-opacity="0"/></linearGradient></defs><path d="M0.0 31.5 L11.4 30.8 L22.6 26.9 L33.8 32.2 L45.0 31.1 L56.2 28.0 L67.4 29.4 L78.6 30.5 L91.2 27.3 L102.4 26.9 L113.6 18.9 L124.9 30.1 L136.1 29.4 L147.3 29.4 L158.5 30.5 L169.7 32.2 L192.1 32.9 L204.0 29.1 L215.6 29.7 L227.1 31.5 L236.9 33.2 L248.1 29.4 L272.0 25.2 L272 56 L0 56 Z" fill="url(#g7)"/><path d="M0.0 31.5 L11.4 30.8 L22.6 26.9 L33.8 32.2 L45.0 31.1 L56.2 28.0 L67.4 29.4 L78.6 30.5 L91.2 27.3 L102.4 26.9 L113.6 18.9 L124.9 30.1 L136.1 29.4 L147.3 29.4 L158.5 30.5 L169.7 32.2 L192.1 32.9 L204.0 29.1 L215.6 29.7 L227.1 31.5 L236.9 33.2 L248.1 29.4 L272.0 25.2" fill="none" stroke="#82bae3" stroke-width="2.9" stroke-linejoin="round"/><rect x="0" y="63.75" width="272" height="3" fill="#d0d0d0"/><rect x="272" y="24.2" width="30" height="2.5" fill="url(#h7)"/><rect x="272" y="26.7" width="30" height="24.8" fill="url(#h7)" opacity="0.12"/><rect x="272" y="63.75" width="30" height="3" fill="url(#h7)" opacity="0.3"/></svg>
<div class="t" style="left:1630.00px;top:913.02px;font-size:17.1px;line-height:17.1px;color:#8cc1e8;">378 ms</div>
<div class="t" style="left:1629.00px;top:940.41px;font-size:17px;line-height:17px;color:#484848;">0 min</div>
<div class="a" style="left:1741px;top:919px;width:32px;height:32px;background:#fff;border:1.5px solid #adadad;border-radius:4px"></div>
<svg style="left:1752px;top:931.50px" width="12" height="8"><path d="M0.5 0.5 L10.5 0.5 L5.5 6 Z" fill="#8a8a8a"/></svg>
<div class="a" style="left:186px;top:1007px;width:22px;height:22px;background:#fff;border:1.5px solid #c9c9c9;border-radius:4px"></div>
<svg style="left:275px;top:992.55px" width="44" height="44"><circle cx="22.3" cy="22" r="21.5" fill="#b8e25e"/><path d="M22.5 30 L22.5 15.5 M16 21.3 L22.5 14.8 L29 21.3" fill="none" stroke="#fff" stroke-width="3.3" stroke-linecap="butt" stroke-linejoin="miter"/></svg>
<div class="t" style="left:344.00px;top:994.14px;font-size:17.5px;line-height:17.5px;color:#111;font-weight:bold;">Website (NA)</div>
<div class="t" style="left:344.00px;top:1020.87px;font-size:17.7px;line-height:17.7px;color:#5a5a5a;">mysite.com</div>
<div class="t" style="left:795.00px;top:1007.64px;font-size:17.5px;line-height:17.5px;color:#3a3a3a;">HTTPS</div>
<div class="t" style="right:988.50px;top:1007.64px;font-size:17.5px;line-height:17.5px;color:#3a3a3a;">100.00%</div>
<div class="t" style="right:817.50px;top:1007.64px;font-size:17.5px;line-height:17.5px;color:#3a3a3a;">12 d</div>
<svg style="left:1274px;top:975.25px" width="304" height="70"><defs><linearGradient id="g8" x1="0" y1="0" x2="0" y2="56" gradientUnits="userSpaceOnUse"><stop offset="0.22" stop-color="#bde3f8" stop-opacity="0.9"/><stop offset="0.6" stop-color="#cbe9fa" stop-opacity="0.55"/><stop offset="0.95" stop-color="#e0f0fb" stop-opacity="0"/></linearGradient><linearGradient id="h8" x1="272" y1="0" x2="304" y2="0" gradientUnits="userSpaceOnUse"><stop offset="0" stop-color="#9fd0f0" stop-opacity="0.35"/><stop offset="1" stop-color="#9fd0f0" stop-opacity="0"/></linearGradient></defs><path d="M0.0 30.6 L11.4 33.1 L22.6 29.4 L33.8 26.4 L45.0 30.3 L56.2 30.6 L67.4 29.4 L78.6 32.7 L91.2 28.9 L102.4 29.4 L113.6 31.3 L124.9 28.0 L136.1 26.6 L147.3 28.5 L158.5 30.8 L169.7 29.2 L180.9 14.5 L192.1 31.7 L204.0 30.3 L215.6 32.2 L227.1 32.0 L238.3 33.4 L248.1 32.2 L272.0 30.8 L272 56 L0 56 Z" fill="url(#g8)"/><path d="M0.0 30.6 L11.4 33.1 L22.6 29.4 L33.8 26.4 L45.0 30.3 L56.2 30.6 L67.4 29.4 L78.6 32.7 L91.2 28.9 L102.4 29.4 L113.6 31.3 L124.9 28.0 L136.1 26.6 L147.3 28.5 L158.5 30.8 L169.7 29.2 L180.9 14.5 L192.1 31.7 L204.0 30.3 L215.6 32.2 L227.1 32.0 L238.3 33.4 L248.1 32.2 L272.0 30.8" fill="none" stroke="#82bae3" stroke-width="2.9" stroke-linejoin="round"/><rect x="0" y="63.75" width="272" height="3" fill="#d0d0d0"/><rect x="272" y="29.8" width="30" height="2.5" fill="url(#h8)"/><rect x="272" y="32.3" width="30" height="19.2" fill="url(#h8)" opacity="0.12"/><rect x="272" y="63.75" width="30" height="3" fill="url(#h8)" opacity="0.3"/></svg>
<div class="t" style="left:1630.00px;top:993.27px;font-size:17.1px;line-height:17.1px;color:#8cc1e8;">485 ms</div>
<div class="t" style="left:1629.00px;top:1020.66px;font-size:17px;line-height:17px;color:#484848;">0 min</div>
<div class="a" style="left:1741px;top:999px;width:32px;height:32px;background:#fff;border:1.5px solid #adadad;border-radius:4px"></div>
<svg style="left:1752px;top:1011.75px" width="12" height="8"><path d="M0.5 0.5 L10.5 0.5 L5.5 6 Z" fill="#8a8a8a"/></svg>
<div class="a" style="left:70px;top:1056px;width:1820px;height:67px;background:#f7f7f7"></div>
<div class="a" style="left:186px;top:1087px;width:22px;height:22px;background:#fff;border:1.5px solid #c9c9c9;border-radius:4px"></div>
<svg style="left:275px;top:1072.80px" width="44" height="44"><circle cx="22.3" cy="22" r="21.5" fill="#b8e25e"/><path d="M22.5 30 L22.5 15.5 M16 21.3 L22.5 14.8 L29 21.3" fill="none" stroke="#fff" stroke-width="3.3" stroke-linecap="butt" stroke-linejoin="miter"/></svg>
<div class="t" style="left:344.00px;top:1074.39px;font-size:17.5px;line-height:17.5px;color:#111;font-weight:bold;"><span style="background:#b5d5f3">Website</span> (APAC)</div>
<div class="t" style="left:344.00px;top:1101.12px;font-size:17.7px;line-height:17.7px;color:#5a5a5a;">mysite.com</div>
<div class="t" style="left:795.00px;top:1087.89px;font-size:17.5px;line-height:17.5px;color:#3a3a3a;">HTTPS</div>
<div class="t" style="right:988.50px;top:1087.89px;font-size:17.5px;line-height:17.5px;color:#3a3a3a;">100.00%</div>
<div class="t" style="right:817.50px;top:1087.89px;font-size:17.5px;line-height:17.5px;color:#3a3a3a;">3 d</div>
<svg style="left:1274px;top:1055.50px" width="304" height="70"><defs><linearGradient id="g9" x1="0" y1="0" x2="0" y2="56" gradientUnits="userSpaceOnUse"><stop offset="0.22" stop-color="#bde3f8" stop-opacity="0.9"/><stop offset="0.6" stop-color="#cbe9fa" stop-opacity="0.55"/><stop offset="0.95" stop-color="#e0f0fb" stop-opacity="0"/></linearGradient><linearGradient id="h9" x1="272" y1="0" x2="304" y2="0" gradientUnits="userSpaceOnUse"><stop offset="0" stop-color="#9fd0f0" stop-opacity="0.35"/><stop offset="1" stop-color="#9fd0f0" stop-opacity="0"/></linearGradient></defs><path d="M0.0 18.9 L11.4 17.5 L22.6 15.8 L33.8 20.6 L45.0 17.2 L56.2 19.6 L67.4 18.9 L78.6 15.8 L91.2 18.2 L102.4 20.0 L115.0 20.3 L124.9 18.9 L136.1 17.5 L146.6 14.7 L158.5 19.2 L169.7 20.0 L180.9 18.9 L192.1 19.6 L204.0 21.7 L215.6 18.6 L227.1 19.6 L238.3 22.0 L248.1 20.0 L272.0 18.9 L272 56 L0 56 Z" fill="url(#g9)"/><path d="M0.0 18.9 L11.4 17.5 L22.6 15.8 L33.8 20.6 L45.0 17.2 L56.2 19.6 L67.4 18.9 L78.6 15.8 L91.2 18.2 L102.4 20.0 L115.0 20.3 L124.9 18.9 L136.1 17.5 L146.6 14.7 L158.5 19.2 L169.7 20.0 L180.9 18.9 L192.1 19.6 L204.0 21.7 L215.6 18.6 L227.1 19.6 L238.3 22.0 L248.1 20.0 L272.0 18.9" fill="none" stroke="#82bae3" stroke-width="2.9" stroke-linejoin="round"/><rect x="0" y="63.75" width="272" height="3" fill="#d0d0d0"/><rect x="272" y="17.9" width="30" height="2.5" fill="url(#h9)"/><rect x="272" y="20.4" width="30" height="31.1" fill="url(#h9)" opacity="0.12"/><rect x="272" y="63.75" width="30" height="3" fill="url(#h9)" opacity="0.3"/></svg>
<div class="t" style="left:1630.00px;top:1073.52px;font-size:17.1px;line-height:17.1px;color:#8cc1e8;">610 ms</div>
<div class="t" style="left:1629.00px;top:1100.91px;font-size:17px;line-height:17px;color:#484848;">0 min</div>
<div class="a" style="left:1741px;top:1079px;width:32px;height:32px;background:#fff;border:1.5px solid #adadad;border-radius:4px"></div>
<svg style="left:1752px;top:1092.00px" width="12" height="8"><path d="M0.5 0.5 L10.5 0.5 L5.5 6 Z" fill="#8a8a8a"/></svg>
<div class="a" style="left:1902px;top:986px;width:35px;height:124px;background:#ebebeb;border-radius:5px"></div>
<div class="t" style="left:1920.2px;top:1033.6px;font-size:14.4px;line-height:14.4px;color:#a6a6a6;will-change:transform;transform:translate(-50%,-50%) rotate(-90deg) scaleY(1.06);transform-origin:50% 50%">SUPPORT</div>
<svg style="left:1907.7px;top:1077.1px" width="24" height="24"><circle cx="12" cy="12" r="8.4" fill="none" stroke="#9d9d9d" stroke-width="5.2" stroke-dasharray="6.0 7.19" stroke-dashoffset="3.0"/><circle cx="12" cy="12" r="10.4" fill="none" stroke="#a3a3a3" stroke-width="1.3"/><circle cx="12" cy="12" r="6.3" fill="none" stroke="#a3a3a3" stroke-width="1.3"/></svg>
<div class="a" style="left:0px;top:1124px;width:1999px;height:1px;background:#3f6e46"></div>
</body></html>
